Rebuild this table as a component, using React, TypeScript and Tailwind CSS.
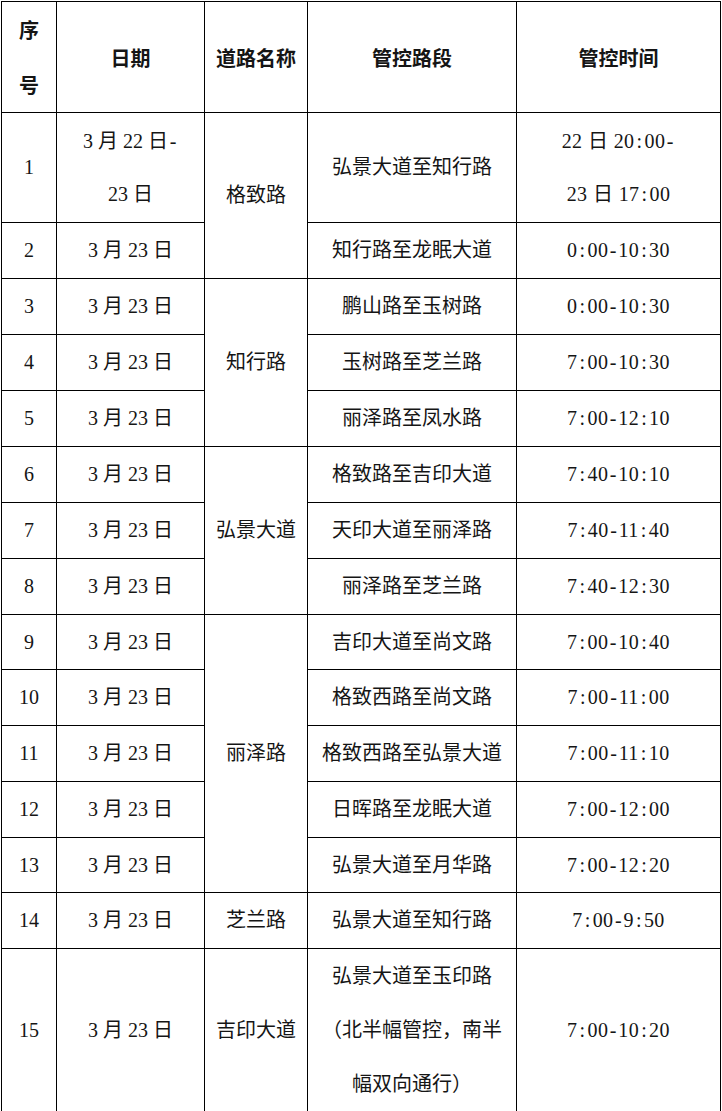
const rows: { no: string; date: string[]; road?: { name: string; span: number }; seg: string[]; time: string[]; h: string }[] = [
  { no: "1", date: ["3 月 22 日-", "23 日"], road: { name: "格致路", span: 2 }, seg: ["弘景大道至知行路"], time: ["22 日 20:00-", "23 日 17:00"], h: "h-[110px]" },
  { no: "2", date: ["3 月 23 日"], seg: ["知行路至龙眠大道"], time: ["0:00-10:30"], h: "h-[56px]" },
  { no: "3", date: ["3 月 23 日"], road: { name: "知行路", span: 3 }, seg: ["鹏山路至玉树路"], time: ["0:00-10:30"], h: "h-[56px]" },
  { no: "4", date: ["3 月 23 日"], seg: ["玉树路至芝兰路"], time: ["7:00-10:30"], h: "h-[56px]" },
  { no: "5", date: ["3 月 23 日"], seg: ["丽泽路至凤水路"], time: ["7:00-12:10"], h: "h-[56px]" },
  { no: "6", date: ["3 月 23 日"], road: { name: "弘景大道", span: 3 }, seg: ["格致路至吉印大道"], time: ["7:40-10:10"], h: "h-[56px]" },
  { no: "7", date: ["3 月 23 日"], seg: ["天印大道至丽泽路"], time: ["7:40-11:40"], h: "h-[56px]" },
  { no: "8", date: ["3 月 23 日"], seg: ["丽泽路至芝兰路"], time: ["7:40-12:30"], h: "h-[56px]" },
  { no: "9", date: ["3 月 23 日"], road: { name: "丽泽路", span: 5 }, seg: ["吉印大道至尚文路"], time: ["7:00-10:40"], h: "h-[55px]" },
  { no: "10", date: ["3 月 23 日"], seg: ["格致西路至尚文路"], time: ["7:00-11:00"], h: "h-[56px]" },
  { no: "11", date: ["3 月 23 日"], seg: ["格致西路至弘景大道"], time: ["7:00-11:10"], h: "h-[56px]" },
  { no: "12", date: ["3 月 23 日"], seg: ["日晖路至龙眠大道"], time: ["7:00-12:00"], h: "h-[56px]" },
  { no: "13", date: ["3 月 23 日"], seg: ["弘景大道至月华路"], time: ["7:00-12:20"], h: "h-[55px]" },
  { no: "14", date: ["3 月 23 日"], road: { name: "芝兰路", span: 1 }, seg: ["弘景大道至知行路"], time: ["7:00-9:50"], h: "h-[56px]" },
  { no: "15", date: ["3 月 23 日"], road: { name: "吉印大道", span: 1 }, seg: ["弘景大道至玉印路", "（北半幅管控，南半", "幅双向通行）"], time: ["7:00-10:20"], h: "h-[161px]" },
];

// colon and hyphen get a half-em box, like the monospaced latin of the original
function Mono({ text }: { text: string }) {
  return (
    <>
      {text.split(/([:-])/).map((p, i) =>
        p === ":" || p === "-" ? (
          <span key={i} className="inline-block w-[0.5em] text-center">
            {p}
          </span>
        ) : (
          <span key={i}>{p}</span>
        )
      )}
    </>
  );
}

function Lines({ items }: { items: string[] }) {
  return (
    <>
      {items.map((t, i) => (
        <div key={i}>
          <Mono text={t} />
        </div>
      ))}
    </>
  );
}

const td = "border border-black text-center align-middle p-0";

export default function App() {
  return (
    <div className="bg-white w-[722px] h-[1111px] pt-px pl-px">
      <table
        className="table-fixed border-collapse w-[719px] text-[20px] leading-[53px] text-[#151515]"
        style={{ fontFamily: '"Liberation Serif", "Noto Sans CJK SC", serif' }}
      >
        <colgroup>
          <col className="w-[55px]" />
          <col className="w-[148px]" />
          <col className="w-[103px]" />
          <col className="w-[209px]" />
          <col className="w-[204px]" />
        </colgroup>
        <thead>
          <tr className="h-[109px] font-bold" style={{ fontFamily: '"Noto Sans CJK SC", sans-serif' }}>
            <th className={`${td} leading-[55px]`}>
              <div>序</div>
              <div>号</div>
            </th>
            <th className={td}>日期</th>
            <th className={td}>道路名称</th>
            <th className={td}>管控路段</th>
            <th className={td}>管控时间</th>
          </tr>
        </thead>
        <tbody>
          {rows.map((r) => (
            <tr key={r.no} className={r.h}>
              <td className={td}>{r.no}</td>
              <td className={td}>
                <Lines items={r.date} />
              </td>
              {r.road && (
                <td className={td} rowSpan={r.road.span}>
                  {r.road.name}
                </td>
              )}
              <td className={`${td} ${r.seg.length > 1 ? "leading-[54px]" : ""}`}>
                <Lines items={r.seg} />
              </td>
              <td className={`${td} tracking-[0.4px]`}>
                <Lines items={r.time} />
              </td>
            </tr>
          ))}
        </tbody>
      </table>
    </div>
  );
}
